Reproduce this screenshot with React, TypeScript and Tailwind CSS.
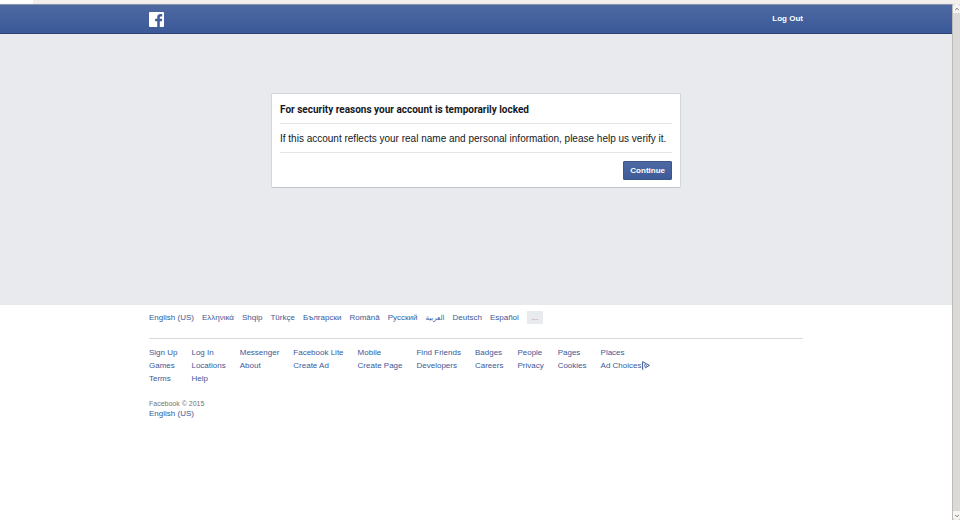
import { ChevronDown, ChevronUp } from 'lucide-react'

const languages = [
  { label: 'English (US)', lang: 'en' },
  { label: 'Ελληνικά', lang: 'el' },
  { label: 'Shqip', lang: 'sq' },
  { label: 'Türkçe', lang: 'tr' },
  { label: 'Български', lang: 'bg' },
  { label: 'Română', lang: 'ro' },
  { label: 'Русский', lang: 'ru' },
  { label: 'العربية', lang: 'ar' },
  { label: 'Deutsch', lang: 'de' },
  { label: 'Español', lang: 'es' },
]

const footerLinks = [
  'Sign Up', 'Log In', 'Messenger', 'Facebook Lite', 'Mobile', 'Find Friends', 'Badges', 'People', 'Pages', 'Places',
  'Games', 'Locations', 'About', 'Create Ad', 'Create Page', 'Developers', 'Careers', 'Privacy', 'Cookies', 'Ad Choices',
  'Terms', 'Help',
]

function Logo() {
  return (
    <svg viewBox="0 0 15 15" className="block size-[15px]" aria-hidden="true">
      <rect width="15" height="15" rx="1" fill="#fff" />
      <path d="M8.2 15V9.3H6.1V6.8h2.1V5.3c0-2.2 1.3-3.3 3.3-3.3.8 0 1.5.1 1.7.1v2.3H12c-1 0-1.2.5-1.2 1.2v1.2h2.4l-.3 2.5h-2.1V15z" fill="#43609c" />
    </svg>
  )
}

function AdChoicesIcon() {
  return (
    <svg viewBox="0 0 9 9" className="block size-[9px]" fill="none" stroke="#3b5998" aria-hidden="true">
      <path d="M2.4 8.3H1.6V.7l6.9 3.7L4 7" strokeWidth="1" strokeLinejoin="round" />
      <path d="M3.6 3.2v2.6l2.3-1.3z" strokeWidth=".6" />
    </svg>
  )
}

function Header() {
  return (
    <header className="border-y border-t-[#8c95ae] border-b-[#2f4372] bg-linear-to-b from-[#4e69a2] to-[#3b5998] shadow-sm">
      <div className="mx-auto flex h-7 max-w-[654px] items-center justify-between">
        <a href="#" aria-label="Facebook"><Logo /></a>
        <button className="text-[8px] font-bold text-white">Log Out</button>
      </div>
    </header>
  )
}

function LockedCard() {
  return (
    <section className="mx-auto max-w-[410px] rounded-xs border border-[#d3d6dc] border-b-[#c0c3ca] bg-white px-2 pb-[7px]">
      <h1 className="border-b border-[#e3e4e7] pt-[3px] font-[Roboto,sans-serif] text-[10px]/[26px] font-bold text-[#141823]">
        For security reasons your account is temporarily locked
      </h1>
      <p className="border-b border-[#e3e4e7] pt-[2px] text-[10px]/[26px] text-[#141823]">
        If this account reflects your real name and personal information, please help us verify it.
      </p>
      <div className="flex justify-end pt-2">
        <button className="h-[19px] rounded-[1px] border border-[#3d5688] bg-linear-to-b from-[#4e69a2] to-[#3d5b99] px-[6px] text-[8px] font-bold text-white">
          Continue
        </button>
      </div>
    </section>
  )
}

function Footer() {
  return (
    <footer className="mx-auto max-w-[654px] pt-[6px] text-[8px]/[13px] text-[#3b5998]">
      <div className="flex flex-wrap items-center gap-2 border-b border-[#d9dadc] pb-[14px]">
        {languages.map(item => (
          <a
            key={item.lang}
            href="#"
            lang={item.lang}
            className={item.lang === 'ar' ? 'text-[7px] hover:underline' : 'hover:underline'}
          >
            {item.label}
          </a>
        ))}
        <button aria-label="More languages" className="h-[13px] w-4 bg-[#e9eaed] text-[#7f8694]">...</button>
      </div>
      <nav className="mt-[7px] grid grid-cols-[repeat(10,auto)] justify-start gap-x-[14px]">
        {footerLinks.map(label => (
          <a key={label} href="#" className="flex items-center whitespace-nowrap hover:underline">
            {label}
            {label === 'Ad Choices' && <AdChoicesIcon />}
          </a>
        ))}
      </nav>
      <div className="mt-[14px] leading-[10px]">
        <p className="text-[7px] text-[#737373]">Facebook © 2015</p>
        <a href="#" className="block hover:underline">English (US)</a>
      </div>
    </footer>
  )
}

function Scrollbar() {
  return (
    <div className="flex w-2 flex-col border-l border-[#bdbbb8] bg-[#dcdad8]" aria-hidden="true">
      <div className="flex h-[9px] items-center justify-center rounded-t-sm bg-[#f6f5f4]">
        <ChevronUp className="size-[6px] text-[#77736f]" strokeWidth={4} />
      </div>
      <div className="flex-1" />
      <div className="flex h-[9px] items-center justify-center rounded-b-sm bg-[#f6f5f4]">
        <ChevronDown className="size-[6px] text-[#77736f]" strokeWidth={4} />
      </div>
    </div>
  )
}

export default function App() {
  return (
    <div className="flex min-h-screen flex-col bg-white font-['Liberation_Sans','DejaVu_Sans',sans-serif]">
      <div className="h-1 bg-[#f2efec]">
        <div className="h-full w-[33px] bg-white" />
      </div>
      <div className="flex flex-1">
        <div className="min-w-0 flex-1">
          <Header />
          <main className="bg-[#e9eaed] pt-[59px] pb-[117px]">
            <LockedCard />
          </main>
          <Footer />
        </div>
        <Scrollbar />
      </div>
    </div>
  )
}
